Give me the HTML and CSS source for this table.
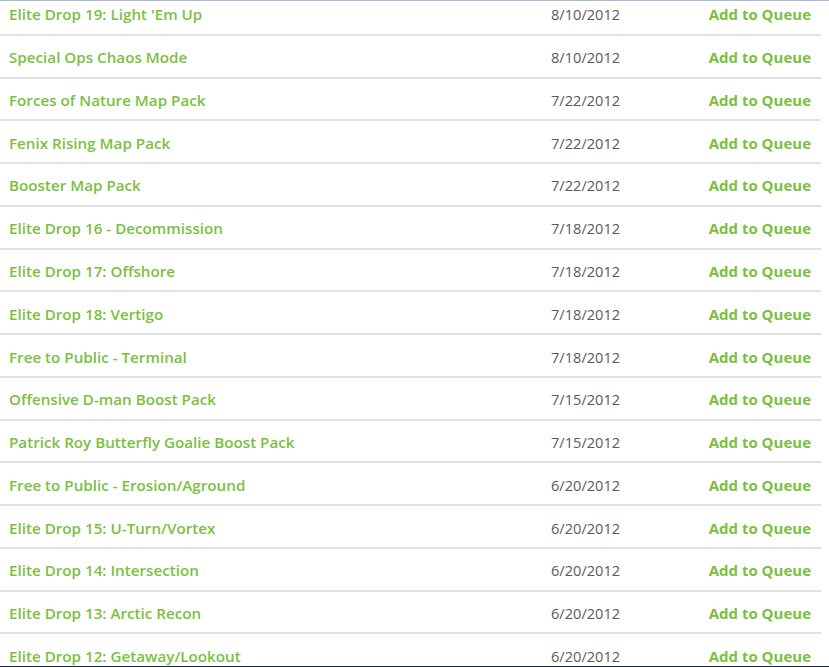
FILE: index.html
```html
<!DOCTYPE html>
<html lang="en">
<head>
    <meta charset="UTF-8" />
    <title>Downloads</title>
    <link rel="stylesheet" href="styles.css">
</head>
<body>
    <div class="frame">
        <div class="list">
            <div class="row"><a class="title" href="#">Elite Drop 19: Light 'Em Up</a><span class="date">8/10/2012</span><a class="queue" href="#">Add to Queue</a></div>
            <div class="row"><a class="title" href="#">Special Ops Chaos Mode</a><span class="date">8/10/2012</span><a class="queue" href="#">Add to Queue</a></div>
            <div class="row"><a class="title" href="#">Forces of Nature Map Pack</a><span class="date">7/22/2012</span><a class="queue" href="#">Add to Queue</a></div>
            <div class="row"><a class="title" href="#">Fenix Rising Map Pack</a><span class="date">7/22/2012</span><a class="queue" href="#">Add to Queue</a></div>
            <div class="row"><a class="title" href="#">Booster Map Pack</a><span class="date">7/22/2012</span><a class="queue" href="#">Add to Queue</a></div>
            <div class="row"><a class="title" href="#">Elite Drop 16 - Decommission</a><span class="date">7/18/2012</span><a class="queue" href="#">Add to Queue</a></div>
            <div class="row"><a class="title" href="#">Elite Drop 17: Offshore</a><span class="date">7/18/2012</span><a class="queue" href="#">Add to Queue</a></div>
            <div class="row"><a class="title" href="#">Elite Drop 18: Vertigo</a><span class="date">7/18/2012</span><a class="queue" href="#">Add to Queue</a></div>
            <div class="row"><a class="title" href="#">Free to Public - Terminal</a><span class="date">7/18/2012</span><a class="queue" href="#">Add to Queue</a></div>
            <div class="row"><a class="title" href="#">Offensive D-man Boost Pack</a><span class="date">7/15/2012</span><a class="queue" href="#">Add to Queue</a></div>
            <div class="row"><a class="title" href="#">Patrick Roy Butterfly Goalie Boost Pack</a><span class="date">7/15/2012</span><a class="queue" href="#">Add to Queue</a></div>
            <div class="row"><a class="title" href="#">Free to Public - Erosion/Aground</a><span class="date">6/20/2012</span><a class="queue" href="#">Add to Queue</a></div>
            <div class="row"><a class="title" href="#">Elite Drop 15: U-Turn/Vortex</a><span class="date">6/20/2012</span><a class="queue" href="#">Add to Queue</a></div>
            <div class="row"><a class="title" href="#">Elite Drop 14: Intersection</a><span class="date">6/20/2012</span><a class="queue" href="#">Add to Queue</a></div>
            <div class="row"><a class="title" href="#">Elite Drop 13: Arctic Recon</a><span class="date">6/20/2012</span><a class="queue" href="#">Add to Queue</a></div>
            <div class="row"><a class="title" href="#">Elite Drop 12: Getaway/Lookout</a><span class="date">6/20/2012</span><a class="queue" href="#">Add to Queue</a></div>
        </div>
    </div>
</body>
</html>
```

FILE: styles.css
```css
* {
    box-sizing: border-box;
    margin: 0;
    padding: 0;
}

html, body {
    height: 100%;
}

body {
    background: #fff;
    font-family: 'Open Sans', 'DejaVu Sans', sans-serif;
}

/* window area, scrolled a little past the first row */
.frame {
    height: 667px;
    overflow: hidden;
    border-top: 1px solid #a9bbd2;
    border-bottom: 1px solid #15263d;
}

.list {
    width: 821px;
    margin-top: -8px;
}

.row {
    display: grid;
    grid-template-columns: 542px 1fr auto;
    align-items: center;
    height: 42.78px;
    padding: 2px 10px 0 9px;
    border-bottom: 2px solid #e2e2e2;
}

.title,
.queue {
    color: #7bbf3f;
    font-weight: 600;
    font-size: 15.2px;
    text-decoration: none;
}

.queue {
    font-weight: 700;
    font-size: 15px;
}

.date {
    color: #5a5a5a;
    font-size: 14.6px;
}
```
